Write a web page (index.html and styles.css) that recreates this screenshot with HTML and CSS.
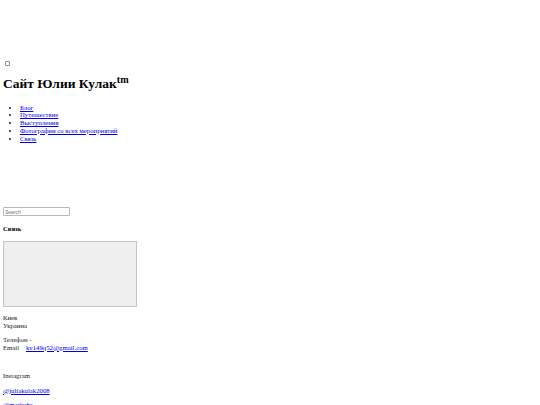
FILE: index.html
```html
<!DOCTYPE html>
<html lang="ru">
<head>
    <meta charset="UTF-8">
    <title>Сайт Юлии Кулак</title>
    <link rel="stylesheet" href="styles.css">
</head>
<body>
    <div class="header-space"></div>
    <input type="checkbox" class="menu-toggle">
    <h1>Сайт Юлии Кулак<sup>tm</sup></h1>
    <ul class="menu">
        <li><a href="#">Блог</a></li>
        <li><a href="#">Путешествие</a></li>
        <li><a href="#">Выступления</a></li>
        <li><a href="#">Фотографии со всех мероприятий</a></li>
        <li><a href="#">Связь</a></li>
    </ul>
    <div class="banner-space"></div>
    <form class="search">
        <input type="text" placeholder="Search">
    </form>
    <h4>Связь</h4>
    <div class="map"></div>
    <p>Киев<br>Украина</p>
    <p>Телефон -<br>Email &nbsp;&nbsp; <a href="#">kv149q52@gmail.com</a></p>
    <p class="spacer">&nbsp;</p>
    <p>Instagram</p>
    <p><a href="#">@juliakulak2008</a></p>
    <p><a href="#">@markuha</a></p>
</body>
</html>
```

FILE: styles.css
```css
body {
    font-family: 'Liberation Serif', serif;
    font-size: 6.75px;
    line-height: 7.75px;
    margin: 3px;
    color: #222;
}
.header-space {
    height: 58px;
}
.menu-toggle {
    display: block;
    appearance: none;
    width: 5px;
    height: 5px;
    margin: 0 0 0 2px;
    border: 1px solid #8f8f8f;
    border-radius: 1px;
    background: #fff;
}
h1 {
    font-size: 13.5px;
    line-height: 15.5px;
    margin: 10px 0 12px;
    color: #000;
}
sup {
    font-size: 0.75em;
    line-height: 0;
}
p {
    margin: 6.75px 0;
}
.spacer {
    height: 7px;
}
.menu {
    margin: 0;
    padding-left: 17px;
}
.banner-space {
    height: 65px;
}
.search {
    margin: 0;
}
.search input {
    box-sizing: border-box;
    display: block;
    width: 67px;
    height: 9px;
    padding: 0 1px;
    font-family: 'Liberation Sans', sans-serif;
    font-size: 5px;
    border: 1px solid #b8b8b8;
    border-radius: 1px;
}
h4 {
    font-size: 6.75px;
    margin: 9px 0 8px;
    color: #000;
}
.map {
    width: 132px;
    height: 64px;
    background: #efefef;
    border: 1px solid #c4c4c4;
}
a {
    color: #0000ee;
}
```
